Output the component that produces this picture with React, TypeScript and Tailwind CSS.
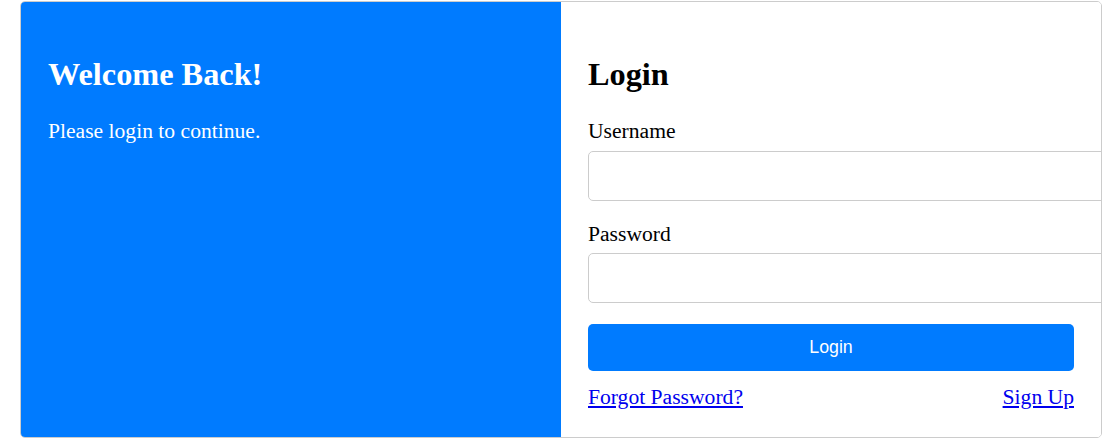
import React from "react";

export default function App() {
  const serif = { fontFamily: '"Liberation Serif", "Times New Roman", serif' } as React.CSSProperties;
  return (
    <div className="w-[1110px] h-[445px] bg-white" style={serif}>
      <div className="ml-[20px] mt-px w-[1082px] h-[437px] border border-[#cccccc] rounded-[5px] overflow-hidden flex">
        <div className="w-[540px] h-full bg-[#007bff] text-white px-[27px] pt-[53.5px] flex flex-col">
          <h2 className="text-[32.3px] leading-[36px] font-bold">Welcome Back!</h2>
          <p className="mt-[27.6px] text-[21.6px] leading-[24px]">Please login to continue.</p>
        </div>
        <div className="w-[540px] h-full bg-white text-black px-[27px] pt-[53.5px] flex flex-col">
          <h2 className="text-[32.3px] leading-[36px] font-bold">Login</h2>
          <label className="mt-[27.6px] text-[21.6px] leading-[24px]">Username</label>
          <input
            type="text"
            className="mt-[8px] h-[50px] w-[calc(100%+32px)] shrink-0 border border-[#cccccc] rounded-[5px] px-[15px] outline-none"
          />
          <label className="mt-[20.7px] text-[21.6px] leading-[24px]">Password</label>
          <input
            type="password"
            className="mt-[7.5px] h-[50px] w-[calc(100%+32px)] shrink-0 border border-[#cccccc] rounded-[5px] px-[15px] outline-none"
          />
          <button
            className="mt-[20.7px] h-[47.5px] w-full shrink-0 bg-[#007bff] text-white rounded-[5px] text-[17.78px]"
            style={{ fontFamily: '"Liberation Sans", Arial, sans-serif' }}
          >
            Login
          </button>
          <div className="mt-[13.3px] flex justify-between text-[21.6px] leading-[24px]">
            <a href="#" className="text-[#0000ee] underline">Forgot Password?</a>
            <a href="#" className="text-[#0000ee] underline">Sign Up</a>
          </div>
        </div>
      </div>
    </div>
  );
}
